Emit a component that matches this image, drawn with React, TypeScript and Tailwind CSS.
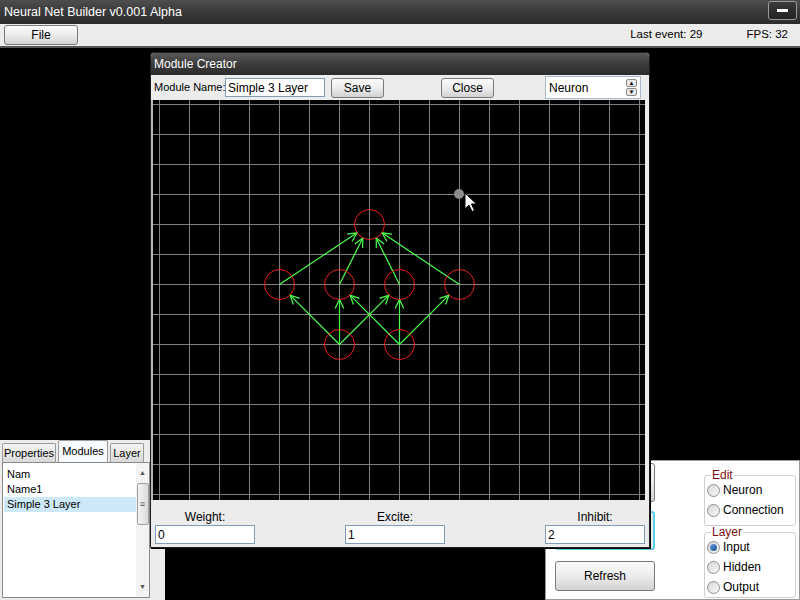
import React from 'react';

// canvas layout of the module being edited (local canvas coordinates)
const nodes: Record<string, [number, number]> = {
  t: [216, 124],
  m0: [126, 184],
  m1: [186, 184],
  m2: [246, 184],
  m3: [306, 184],
  b0: [186, 244],
  b1: [246, 244],
};

const edges: [string, string][] = [
  ['b0', 'm0'],
  ['b0', 'm1'],
  ['b0', 'm2'],
  ['b1', 'm1'],
  ['b1', 'm2'],
  ['b1', 'm3'],
  ['m0', 't'],
  ['m1', 't'],
  ['m2', 't'],
  ['m3', 't'],
];

const R = 15;
const gridX = Array.from({ length: 17 }, (_, i) => 6 + i * 30);
const gridY = Array.from({ length: 14 }, (_, i) => 4 + i * 30);

const NetCanvas = () => {
  return (
    <svg width={492} height={400} className="block bg-black">
      {gridX.map((x) => (
        <line key={'x' + x} x1={x + 0.5} y1={0} x2={x + 0.5} y2={400} stroke="#808080" strokeWidth={1} />
      ))}
      {gridY.map((y) => (
        <line key={'y' + y} x1={0} y1={y + 0.5} x2={492} y2={y + 0.5} stroke="#808080" strokeWidth={1} />
      ))}
      {edges.map(([a, b]) => {
        const [x1, y1] = nodes[a];
        const [x2, y2] = nodes[b];
        const dx = x2 - x1;
        const dy = y2 - y1;
        const len = Math.hypot(dx, dy);
        const ux = dx / len;
        const uy = dy / len;
        const ex = x2 - ux * R;
        const ey = y2 - uy * R;
        const ang = Math.atan2(-uy, -ux);
        const h1 = [ex + Math.cos(ang + 0.45) * 10, ey + Math.sin(ang + 0.45) * 10];
        const h2 = [ex + Math.cos(ang - 0.45) * 10, ey + Math.sin(ang - 0.45) * 10];
        return (
          <g key={a + b} stroke="#4cff4c" strokeWidth={1.2} fill="none">
            <line x1={x1 + 0.5} y1={y1 + 0.5} x2={ex + 0.5} y2={ey + 0.5} />
            <polyline points={`${h1[0] + 0.5},${h1[1] + 0.5} ${ex + 0.5},${ey + 0.5} ${h2[0] + 0.5},${h2[1] + 0.5}`} />
          </g>
        );
      })}
      {Object.entries(nodes).map(([k, [x, y]]) => (
        <circle key={k} cx={x + 0.5} cy={y + 0.5} r={R} stroke="#ec1c1c" strokeWidth={1} fill="none" />
      ))}
      <circle cx={306} cy={94} r={5} fill="#8c8c8c" />
      <g transform="translate(312,93)">
        <polygon
          points="0,0 0,16 4,12 7,18.5 9.5,17.5 6.5,11 11.5,11"
          fill="#ffffff"
          stroke="#000000"
          strokeWidth={1}
          strokeLinejoin="round"
        />
      </g>
    </svg>
  );
};

const XpButton = ({ label, className }: { label: string; className: string }) => (
  <div
    className={`flex items-center justify-center rounded-[3px] border border-[#7a7a7a] bg-gradient-to-b from-[#fbfbfb] via-[#ececec] to-[#d2d2d2] text-[12px] text-black ${className}`}
  >
    {label}
  </div>
);

const TextBox = ({ value, className }: { value: string; className: string }) => (
  <div className={`flex items-center border border-[#7f9db9] bg-white pl-[2px] text-[12px] text-black ${className}`}>
    {value}
  </div>
);

const Radio = ({ label, checked }: { label: string; checked?: boolean }) => (
  <div className="flex h-[20px] items-center gap-[3px] pl-[2px]">
    <span className="flex h-[13px] w-[13px] items-center justify-center rounded-full border border-[#8d8d8d] bg-gradient-to-br from-[#d8d8d8] to-[#f8f8f8]">
      {checked && <span className="h-[7px] w-[7px] rounded-full bg-gradient-to-br from-[#6aa0dc] to-[#1b4f93]" />}
    </span>
    <span className="text-[12px] text-black">{label}</span>
  </div>
);

const GroupBox = ({ title, children, className }: { title: string; children: React.ReactNode; className?: string }) => (
  <fieldset className={`rounded-[3px] border border-[#d0d0c8] px-0 ${className ?? ''}`}>
    <legend className="ml-[6px] h-[10px] px-[1px] text-[12px] leading-[10px] text-[#7a1010]">{title}</legend>
    {children}
  </fieldset>
);

// bottom fields of the module creator: label, value, left margin
const weightFields: [string, string, string][] = [
  ['Weight:', '0', 'ml-0'],
  ['Excite:', '1', 'ml-[90px]'],
  ['Inhibit:', '2', 'ml-[100px]'],
];

const ModuleCreator = () => (
  <div className="absolute left-[150px] top-[4px] flex h-[496px] w-[500px] flex-col rounded-t-[4px] border border-[#1e1e1e] bg-[#ececec] shadow-[1px_1px_0_#000]">
    <div className="flex h-[22px] items-center rounded-t-[3px] bg-gradient-to-b from-[#5a5a5a] via-[#3c3c3c] to-[#2c2c2c] pl-[3px] text-[12px] text-white">
      Module Creator
    </div>
    <div className="flex h-[25px] items-center pl-[3px] text-[11px] text-black">
      <span className="w-[71px] whitespace-nowrap">Module Name:</span>
      <TextBox value="Simple 3 Layer" className="h-[19px] w-[100px]" />
      <XpButton label="Save" className="ml-[6px] h-[20px] w-[53px]" />
      <XpButton label="Close" className="ml-[57px] h-[20px] w-[53px]" />
      <div className="ml-[51px] flex h-[23px] w-[96px] items-center justify-between border border-[#a8b8c8] bg-white pl-[3px] pr-[3px] text-[12px]">
        <span>Neuron</span>
        <span className="flex flex-col gap-[1px]">
          <span className="flex h-[8px] w-[11px] items-center justify-center rounded-[2px] border border-[#8a8a8a] bg-[#e8e8e8] text-[6px] leading-none">▲</span>
          <span className="flex h-[8px] w-[11px] items-center justify-center rounded-[2px] border border-[#8a8a8a] bg-[#e8e8e8] text-[6px] leading-none">▼</span>
        </span>
      </div>
    </div>
    <div className="border-l-2 border-[#b8b8b8]">
      <NetCanvas />
    </div>
    <div className="flex flex-1 pl-[4px] pt-[10px] text-[12px] text-black">
      {weightFields.map(([label, val, ml]) => (
        <div key={label} className={`flex w-[100px] flex-col ${ml}`}>
          <span className="h-[14px] text-center leading-[14px]">{label}</span>
          <TextBox value={val} className="mt-[1px] h-[19px] w-[100px]" />
        </div>
      ))}
    </div>
  </div>
);

const ModulesPanel = () => (
  <div className="absolute left-0 top-[392px] flex h-[160px] w-[165px] flex-col bg-[#ececec] text-[11px] text-black">
    <div className="flex h-[22px] items-end gap-[2px] pl-[2px]">
      <div className="flex h-[19px] w-[54px] items-center justify-center rounded-t-[2px] border border-b-0 border-[#9a9a9a] bg-gradient-to-b from-[#f4f4f4] to-[#d9d9d9]">
        Properties
      </div>
      <div className="flex h-[22px] w-[50px] items-center justify-center rounded-t-[2px] border border-b-0 border-[#9a9a9a] bg-[#f7fafd]">
        Modules
      </div>
      <div className="flex h-[19px] w-[34px] items-center justify-center rounded-t-[2px] border border-b-0 border-[#9a9a9a] bg-gradient-to-b from-[#f4f4f4] to-[#d9d9d9]">
        Layer
      </div>
    </div>
    <div className="ml-[2px] flex h-[136px] w-[148px] border border-[#8a8a8a] bg-white">
      <div className="flex flex-1 flex-col pl-[1px] pt-[4px]">
        <div className="h-[15px] pl-[3px] leading-[15px]">Nam</div>
        <div className="h-[15px] pl-[3px] leading-[15px]">Name1</div>
        <div className="h-[15px] bg-[#cde8f6] pl-[3px] leading-[15px]">Simple 3 Layer</div>
      </div>
      <div className="flex w-[13px] flex-col items-center bg-[#f3f3f3] text-[7px] text-[#555]">
        <span className="mt-[4px] h-[12px] leading-[12px]">▲</span>
        <div className="mt-[4px] flex h-[42px] w-[12px] items-center justify-center rounded-[2px] border border-[#a0a0a0] bg-gradient-to-r from-[#f2f2f2] to-[#dcdcdc] text-[9px] leading-none">
          ≡
        </div>
        <span className="mt-auto mb-[4px] h-[12px] leading-[12px]">▼</span>
      </div>
    </div>
  </div>
);

const EditorPanel = () => (
  <div className="absolute left-[545px] top-[412px] flex h-[140px] w-[255px] border border-[#9a9a9a] bg-white">
    <div className="flex flex-col pl-[9px] pt-[2px]">
      <XpButton label="" className="h-[39px] w-[100px]" />
      <div className="mt-[9px] h-[39px] w-[100px] rounded-[3px] border-2 border-[#5ecfe6] bg-[#ececec]" />
      <XpButton label="Refresh" className="mt-[11px] h-[30px] w-[100px]" />
    </div>
    <div className="ml-[49px] flex w-[92px] flex-col pt-[9px]">
      <GroupBox title="Edit" className="pb-[5px]">
        <Radio label="Neuron" />
        <Radio label="Connection" />
      </GroupBox>
      <GroupBox title="Layer" className="mt-[1px]">
        <Radio label="Input" checked />
        <Radio label="Hidden" />
        <Radio label="Output" />
      </GroupBox>
    </div>
  </div>
);

export default function App() {
  return (
    <div className="flex h-[600px] w-[800px] flex-col overflow-hidden bg-black font-['Liberation_Sans',Arial,sans-serif]">
      <div className="flex h-[24px] items-center justify-between bg-gradient-to-b from-[#4e4e4e] via-[#3a3a3a] to-[#2c2c2c] pl-[4px] pr-[3px] text-[12.5px] text-white">
        <span>Neural Net Builder v0.001 Alpha</span>
        <span className="mb-[3px] flex h-[19px] w-[29px] items-center justify-center rounded-[3px] border border-[#9a9a9a] bg-gradient-to-b from-[#3a3a3a] to-[#222]">
          <span className="h-[3px] w-[11px] bg-white" />
        </span>
      </div>
      <div className="flex h-[24px] items-center border-b-2 border-[#555] bg-[#ececec] pl-[4px] text-[12px] text-black">
        <XpButton label="File" className="h-[20px] w-[74px]" />
        <span className="ml-auto text-[11.5px]">Last event: 29</span>
        <span className="ml-[44px] mr-[12px] text-[11.5px]">FPS: 32</span>
      </div>
      <div className="relative flex-1">
        <ModulesPanel />
        <EditorPanel />
        <ModuleCreator />
      </div>
    </div>
  );
}
